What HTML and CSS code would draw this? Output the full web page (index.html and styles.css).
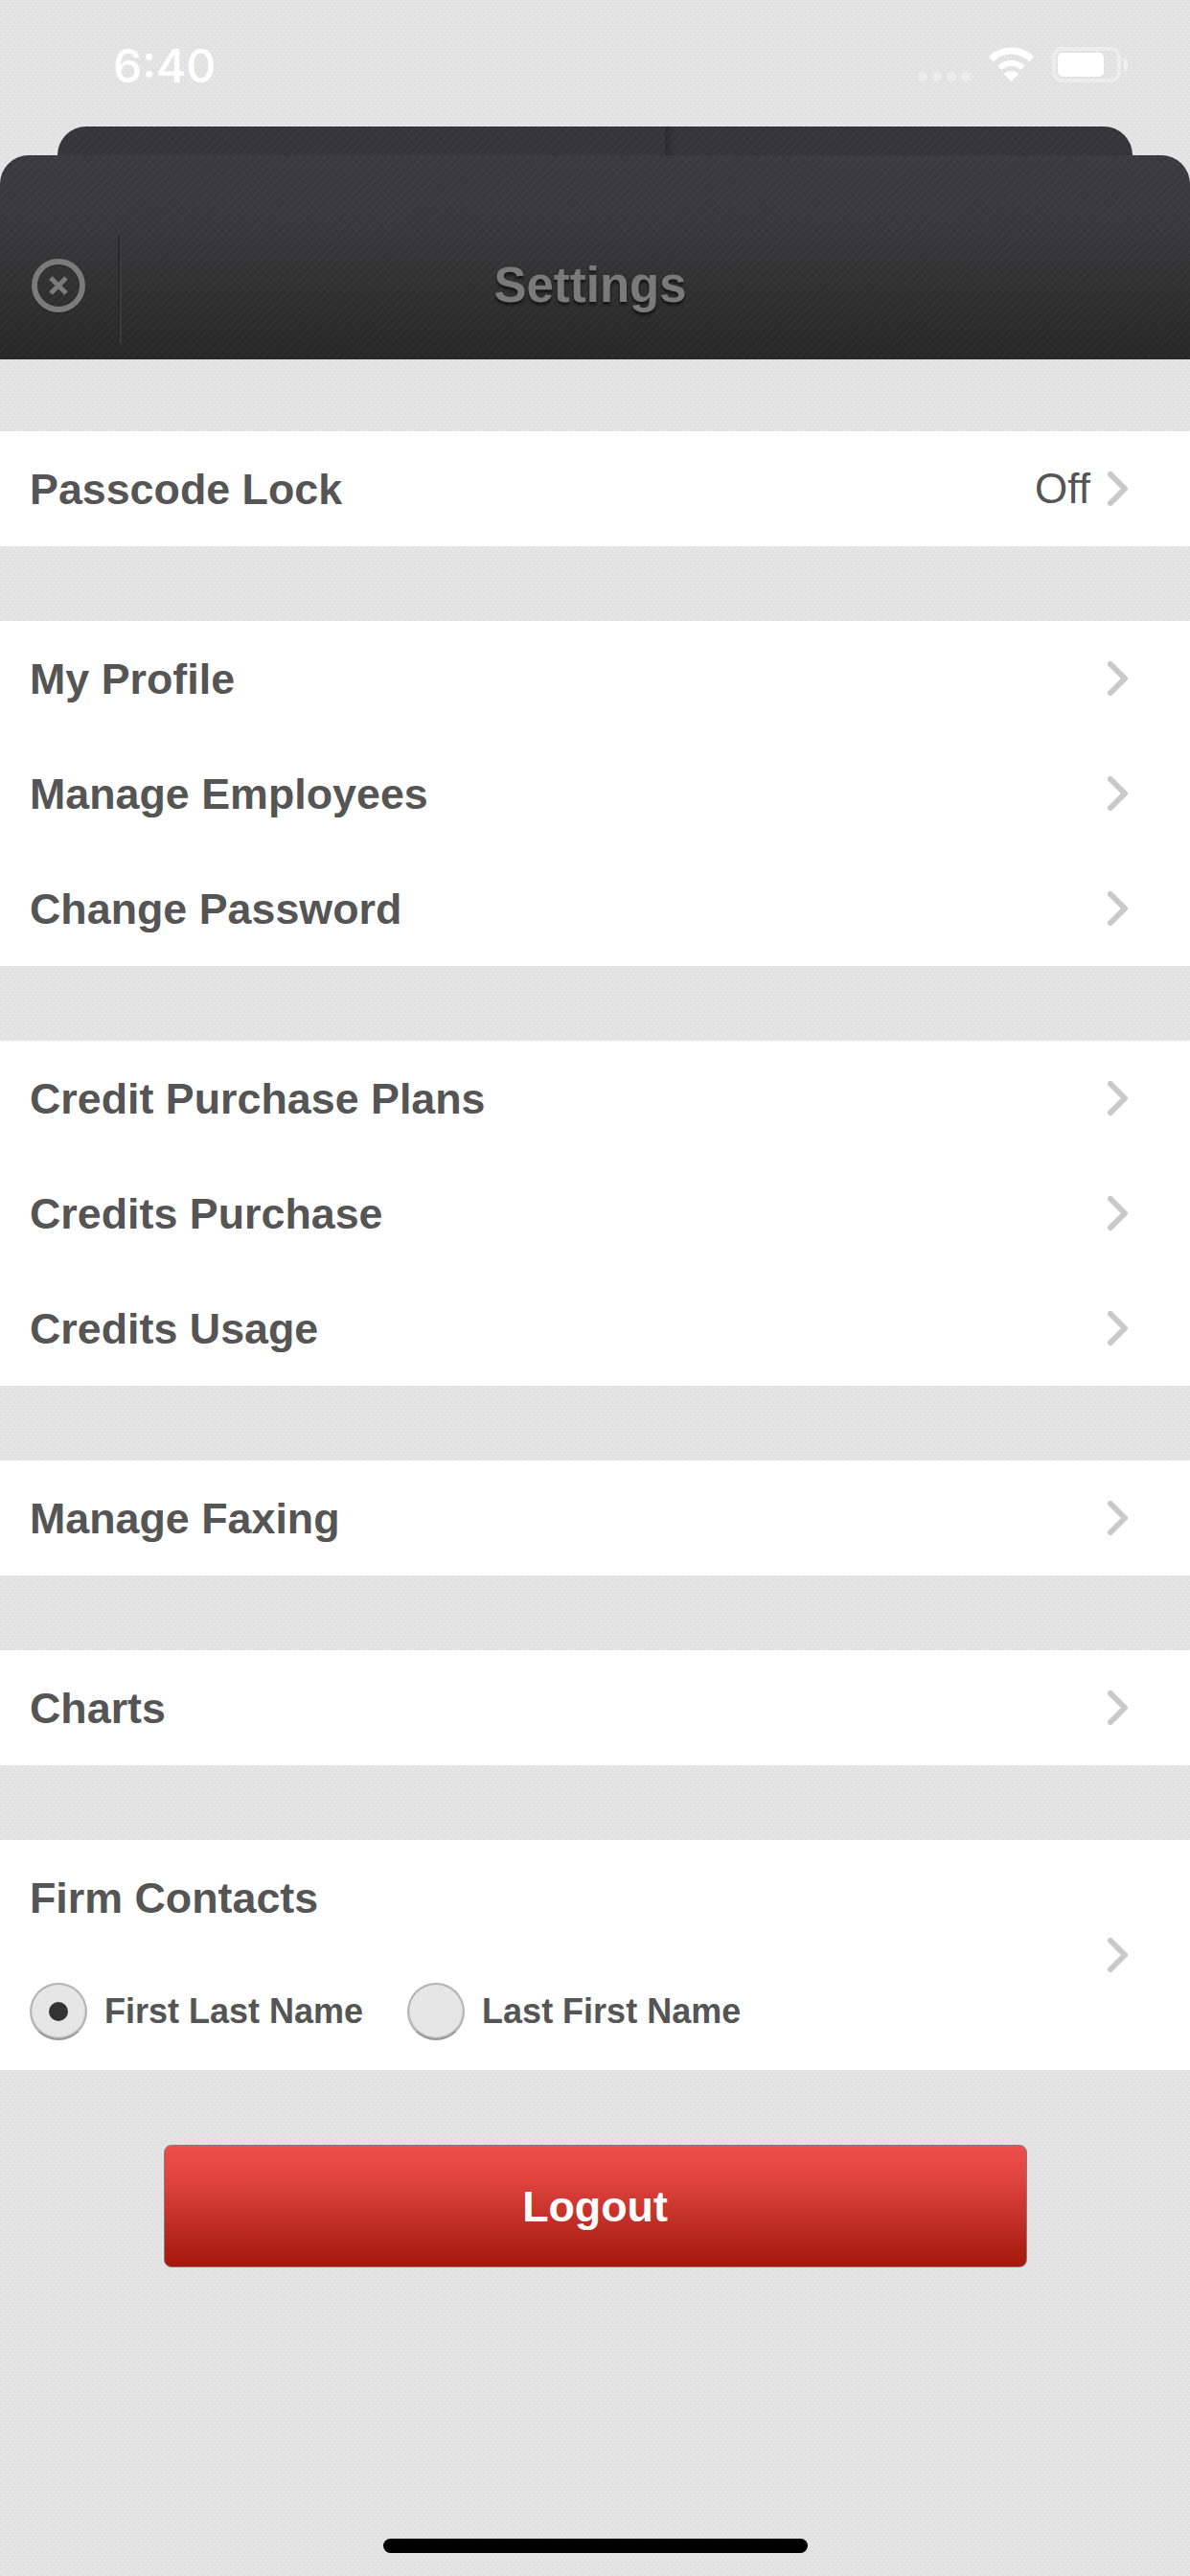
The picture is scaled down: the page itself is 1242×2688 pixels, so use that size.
FILE: index.html
```html
<!DOCTYPE html>
<html lang="en">
<head>
  <meta charset="UTF-8" />
  <meta name="viewport" content="width=device-width, initial-scale=1.0" />
  <title>Settings</title>
  <link rel="stylesheet" href="styles.css">
</head>
<body>
  <div class="status-bar">
    <span class="time">6:40</span>
    <div class="status-icons">
      <div class="signal"><i></i><i></i><i></i><i></i></div>
      <svg class="wifi" width="47" height="36" viewBox="0 0 47 36">
        <path d="M2.3 12.8A30 30 0 0 1 44.7 12.8" fill="none" stroke="#fff" stroke-width="7"/>
        <path d="M11.5 22A17 17 0 0 1 35.5 22" fill="none" stroke="#fff" stroke-width="6"/>
        <path d="M23.5 36L15.5 28Q23.5 22 31.5 28Z" fill="#fff"/>
      </svg>
      <div class="battery"><div class="battery-level"></div></div>
      <div class="battery-nub"></div>
    </div>
  </div>

  <div class="tabs">
    <div class="tab-left"></div>
    <div class="tab-right"></div>
  </div>
  <div class="nav">
    <div class="nav-close">
      <svg width="56" height="58" viewBox="0 0 56 58">
        <circle cx="28" cy="29" r="25" fill="none" stroke="#1c1c1c" stroke-opacity="0.5" stroke-width="6.5"/>
        <circle cx="28" cy="28" r="25" fill="none" stroke="#7b7b7b" stroke-width="6"/>
        <path d="M20 20L36 36M36 20L20 36" stroke="#7b7b7b" stroke-width="5"/>
      </svg>
    </div>
    <h1 class="nav-title">Settings</h1>
  </div>

  <div class="group">
    <div class="row">
      <span class="label">Passcode Lock</span>
      <span class="value">Off</span>
      <svg class="chevron" width="21" height="36" viewBox="0 0 21 36"><path d="M3 3L18 18L3 33" fill="none" stroke="#c9c9c9" stroke-width="6" stroke-linecap="round" stroke-linejoin="round"/></svg>
    </div>
  </div>

  <div class="group">
    <div class="row">
      <span class="label">My Profile</span>
      <svg class="chevron" width="21" height="36" viewBox="0 0 21 36"><path d="M3 3L18 18L3 33" fill="none" stroke="#c9c9c9" stroke-width="6" stroke-linecap="round" stroke-linejoin="round"/></svg>
    </div>
    <div class="row">
      <span class="label">Manage Employees</span>
      <svg class="chevron" width="21" height="36" viewBox="0 0 21 36"><path d="M3 3L18 18L3 33" fill="none" stroke="#c9c9c9" stroke-width="6" stroke-linecap="round" stroke-linejoin="round"/></svg>
    </div>
    <div class="row">
      <span class="label">Change Password</span>
      <svg class="chevron" width="21" height="36" viewBox="0 0 21 36"><path d="M3 3L18 18L3 33" fill="none" stroke="#c9c9c9" stroke-width="6" stroke-linecap="round" stroke-linejoin="round"/></svg>
    </div>
  </div>

  <div class="group">
    <div class="row">
      <span class="label">Credit Purchase Plans</span>
      <svg class="chevron" width="21" height="36" viewBox="0 0 21 36"><path d="M3 3L18 18L3 33" fill="none" stroke="#c9c9c9" stroke-width="6" stroke-linecap="round" stroke-linejoin="round"/></svg>
    </div>
    <div class="row">
      <span class="label">Credits Purchase</span>
      <svg class="chevron" width="21" height="36" viewBox="0 0 21 36"><path d="M3 3L18 18L3 33" fill="none" stroke="#c9c9c9" stroke-width="6" stroke-linecap="round" stroke-linejoin="round"/></svg>
    </div>
    <div class="row">
      <span class="label">Credits Usage</span>
      <svg class="chevron" width="21" height="36" viewBox="0 0 21 36"><path d="M3 3L18 18L3 33" fill="none" stroke="#c9c9c9" stroke-width="6" stroke-linecap="round" stroke-linejoin="round"/></svg>
    </div>
  </div>

  <div class="group">
    <div class="row">
      <span class="label">Manage Faxing</span>
      <svg class="chevron" width="21" height="36" viewBox="0 0 21 36"><path d="M3 3L18 18L3 33" fill="none" stroke="#c9c9c9" stroke-width="6" stroke-linecap="round" stroke-linejoin="round"/></svg>
    </div>
  </div>

  <div class="group">
    <div class="row">
      <span class="label">Charts</span>
      <svg class="chevron" width="21" height="36" viewBox="0 0 21 36"><path d="M3 3L18 18L3 33" fill="none" stroke="#c9c9c9" stroke-width="6" stroke-linecap="round" stroke-linejoin="round"/></svg>
    </div>
  </div>

  <div class="group">
    <div class="row row-contacts">
      <div class="contacts">
        <div class="contacts-title"><span class="label">Firm Contacts</span></div>
        <div class="radios">
          <div class="radio-item">
            <span class="radio radio-on"></span>
            <span class="radio-label">First Last Name</span>
          </div>
          <div class="radio-item">
            <span class="radio"></span>
            <span class="radio-label">Last First Name</span>
          </div>
        </div>
      </div>
      <svg class="chevron" width="21" height="36" viewBox="0 0 21 36"><path d="M3 3L18 18L3 33" fill="none" stroke="#c9c9c9" stroke-width="6" stroke-linecap="round" stroke-linejoin="round"/></svg>
    </div>
  </div>

  <div class="logout-wrap">
    <button class="logout" type="button">Logout</button>
  </div>

  <div class="home-bar"></div>
</body>
</html>
```

FILE: styles.css
```css
html, body {
  height: 100%;
}

body {
  margin: 0;
  width: 1242px;
  min-height: 2688px;
  box-sizing: border-box;
  display: flex;
  flex-direction: column;
  font-family: "Liberation Sans", Arial, sans-serif;
  background-color: #e2e2e2;
  background-image:
    radial-gradient(circle at 2px 2px, rgba(255,255,255,0.22) 1.2px, transparent 1.6px),
    radial-gradient(circle at 5px 5px, rgba(255,255,255,0.22) 1.2px, transparent 1.6px);
  background-size: 6px 6px;
}

/* status bar */
.status-bar {
  height: 132px;
  flex-shrink: 0;
  position: relative;
  display: flex;
  justify-content: space-between;
  align-items: flex-start;
  padding: 0 65px 0 118px;
  box-sizing: border-box;
}

.time {
  margin-top: 40px;
  font-family: Inter, "Liberation Sans", sans-serif;
  font-size: 48px;
  line-height: 58px;
  font-weight: 500;
  color: #fff;
}

.status-icons {
  display: flex;
  align-items: flex-start;
  margin-top: 49px;
}

.signal {
  display: flex;
  gap: 5px;
  margin: 26px 19px 0 0;
}

.signal i {
  width: 10px;
  height: 10px;
  border-radius: 50%;
  background: rgba(255,255,255,0.3);
}

.wifi {
  display: block;
  margin-right: 19px;
}

.battery {
  width: 72px;
  height: 37px;
  box-sizing: border-box;
  border: 4px solid rgba(255,255,255,0.35);
  border-radius: 11px;
  padding: 2px;
}

.battery-level {
  width: 48px;
  height: 25px;
  background: #fff;
  border-radius: 5px;
}

.battery-nub {
  width: 4px;
  height: 13px;
  margin: 12px 0 0 3px;
  background: rgba(255,255,255,0.45);
  border-radius: 0 4px 4px 0;
}

/* dark header */
.tabs {
  height: 30px;
  flex-shrink: 0;
  margin: 0 60px;
  display: flex;
  border-radius: 30px 30px 0 0;
  overflow: hidden;
}

.tab-left,
.tab-right {
  background-color: #363638;
  background-image:
    repeating-linear-gradient(135deg, rgba(255,255,255,0.018) 0, rgba(255,255,255,0.018) 2px, transparent 2px, transparent 6px),
    repeating-linear-gradient(45deg, rgba(0,0,0,0.03) 0, rgba(0,0,0,0.03) 2px, transparent 2px, transparent 6px);
}

.tab-left {
  width: 634px;
}

.tab-right {
  flex: 1;
  box-shadow: inset 10px 0 8px -6px rgba(0,0,0,0.22);
}

.nav {
  height: 213px;
  flex-shrink: 0;
  display: flex;
  align-items: flex-end;
  padding-bottom: 16px;
  box-sizing: border-box;
  border-radius: 30px 30px 0 0;
  background-image:
    repeating-linear-gradient(135deg, rgba(255,255,255,0.018) 0, rgba(255,255,255,0.018) 2px, transparent 2px, transparent 6px),
    repeating-linear-gradient(45deg, rgba(0,0,0,0.03) 0, rgba(0,0,0,0.03) 2px, transparent 2px, transparent 6px),
    linear-gradient(#3b3b3e 0%, #39393b 35%, #272727 100%);
}

.nav-close {
  width: 125px;
  height: 114px;
  flex-shrink: 0;
  display: flex;
  padding: 25px 0 0 33px;
  box-sizing: border-box;
  border-right: 2px solid #2a2a2b;
  box-shadow: 2px 0 0 #3a3a3c;
}

.nav-close svg {
  display: block;
}

.nav-title {
  flex: 1;
  margin: 0 0 32px;
  padding-right: 135px;
  font-size: 51px;
  line-height: 58px;
  font-weight: bold;
  text-align: center;
  color: #7a7a7a;
  text-shadow: 0 3px 3px rgba(0,0,0,0.6);
}

/* settings rows */
.group {
  background: #fff;
  flex-shrink: 0;
  margin-top: 78px;
}

.nav + .group {
  margin-top: 75px;
}

.row {
  height: 120px;
  display: flex;
  align-items: center;
  padding: 0 65px 0 31px;
  box-sizing: border-box;
}

.label {
  flex: 1;
  font-size: 44.8px;
  font-weight: bold;
  color: #555;
}

.value {
  margin-right: 18px;
  font-size: 44px;
  color: #555;
}

.chevron {
  display: block;
  flex-shrink: 0;
}

/* firm contacts */
.row-contacts {
  height: 240px;
}

.contacts {
  flex: 1;
}

.contacts-title {
  height: 120px;
  display: flex;
  align-items: center;
}

.radios {
  display: flex;
  gap: 46px;
  height: 120px;
  align-items: flex-start;
  padding-top: 29px;
  box-sizing: border-box;
}

.radio-item {
  display: flex;
  align-items: center;
  gap: 18px;
}

.radio {
  width: 60px;
  height: 60px;
  box-sizing: border-box;
  display: flex;
  align-items: center;
  justify-content: center;
  border: 2px solid #b4b4b4;
  border-bottom-color: #999;
  border-radius: 50%;
  background: #e6e6e6;
  box-shadow: inset 0 -1px 1px #aaa;
}

.radio-on::after {
  content: "";
  width: 20px;
  height: 20px;
  border-radius: 50%;
  background: #333;
}

.radio-label {
  font-size: 36px;
  font-weight: bold;
  color: #555;
}

/* logout */
.logout-wrap {
  flex-shrink: 0;
  display: flex;
  justify-content: center;
  margin-top: 78px;
}

.logout {
  width: 901px;
  height: 128px;
  padding: 0;
  box-sizing: border-box;
  border: 1px solid #8a7a7a;
  border-radius: 8px;
  background: linear-gradient(#ef4e4a 0%, #e2453f 25%, #c7332b 55%, #ad2014 85%, #a4190c 100%);
  font-family: inherit;
  font-size: 44.8px;
  font-weight: bold;
  color: #fff;
}

.home-bar {
  width: 443px;
  height: 15px;
  margin: auto auto 24px;
  border-radius: 8px;
  background: #000;
  flex-shrink: 0;
}
```
